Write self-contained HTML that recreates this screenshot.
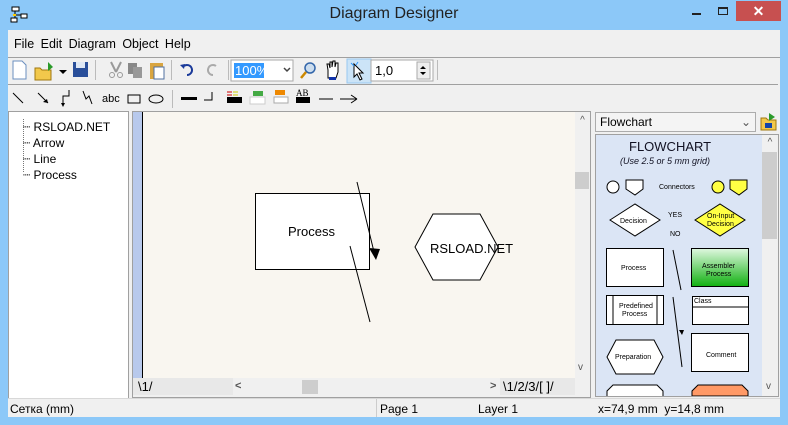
<!DOCTYPE html>
<html><head><meta charset="utf-8"><style>
*{margin:0;padding:0;box-sizing:border-box}
body{width:788px;height:425px;overflow:hidden;background:#8cc8f8;font-family:"Liberation Sans",sans-serif;font-size:12px;position:relative;color:#000}
.a{position:absolute}
</style></head><body>
<div class="a" style="left:10px;top:6px;width:18px;height:18px">
<svg width="18" height="18"><rect x="2" y="1" width="7" height="4" fill="#fff" stroke="#000"/><rect x="1" y="12" width="6" height="4" fill="#fff" stroke="#000"/><rect x="11" y="8" width="6" height="4" fill="#fff" stroke="#000"/><path d="M5 5v7M5 9h6" stroke="#000" fill="none"/><rect x="3" y="8" width="3" height="2" fill="#fc0"/></svg></div>
<div class="a" style="left:0;width:788px;top:5px;text-align:center;font-size:16px;color:#222">Diagram Designer</div>
<div class="a" style="left:692px;top:13px;width:9px;height:2px;background:#222"></div>
<div class="a" style="left:718px;top:7px;width:10px;height:8px;border:1px solid #222;border-top-width:2px"></div>
<div class="a" style="left:736px;top:1px;width:45px;height:20px;background:#c75050;color:#fff;text-align:center;font-size:14px;font-weight:bold;line-height:20px">✕</div>
<div class="a" style="left:8px;top:30px;width:772px;height:387px;background:#f0f0f0"></div>
<div class="a" style="left:14px;top:37px;font-size:12.5px;word-spacing:3px">File Edit Diagram Object Help</div>
<div class="a" style="left:8px;top:57px;width:772px;height:1px;background:#a0a0a0"></div>
<div class="a" style="left:8px;top:84px;width:770px;height:1px;background:#a0a0a0"></div>
<svg class="a" style="left:8px;top:58px" width="440" height="26">
<path d="M5 3h9l4 4v14H5z" fill="#fff" stroke="#6b8fbf"/>
<path d="M27 10h5l2 2h9v10H27z" fill="#f2c84b" stroke="#a07810"/><path d="M40 4l5 5-5 4" fill="#2a9a2a"/>
<path d="M51 12l4 4 4-4z" fill="#000"/>
<rect x="65" y="4" width="15" height="15" fill="#2a4f9a"/><rect x="68" y="4" width="9" height="6" fill="#dfe8f5"/>
<rect x="87" y="2" width="1" height="20" fill="#bbb"/>
<path d="M103 4l5 10M113 4l-5 10" stroke="#999" stroke-width="2"/><circle cx="104" cy="17" r="2.5" fill="none" stroke="#999"/><circle cx="112" cy="17" r="2.5" fill="none" stroke="#999"/>
<rect x="120" y="5" width="9" height="11" fill="#888"/><rect x="125" y="9" width="9" height="11" fill="#999"/>
<rect x="142" y="5" width="13" height="16" fill="#d9a540"/><rect x="146" y="9" width="10" height="12" fill="#fff" stroke="#5070a0"/>
<rect x="163" y="2" width="1" height="20" fill="#bbb"/>
<path d="M176 8a5 5 0 1 1 3 9" fill="none" stroke="#1a3a9a" stroke-width="2"/><path d="M172 7l4 4 1-5z" fill="#1a3a9a"/>
<path d="M208 8a5 5 0 1 0-3 9" fill="none" stroke="#aaa" stroke-width="2"/>
<rect x="220" y="2" width="1" height="20" fill="#bbb"/>
<rect x="223" y="2" width="62" height="21" fill="#fff" stroke="#aaa"/>
<rect x="226" y="5" width="30" height="15" fill="#3399ff"/><text x="227" y="17" fill="#fff" font-size="13" font-family="Liberation Sans">100%</text>
<path d="M276 10l3 3 3-3" stroke="#444" stroke-width="1.5" fill="none"/>
<circle cx="302" cy="10" r="5" fill="#cde" stroke="#36a" stroke-width="1.5"/><path d="M298 14l-5 6" stroke="#c80" stroke-width="2.5"/>
<path d="M320 20v-8l-1-6 2 0 1 4 0-6 2 0 0 5 1-6 2 0 0 6 1-4 2 0 0 9-2 6z" fill="#fff" stroke="#000"/><rect x="321" y="19" width="7" height="3" fill="#13a"/>
<rect x="339" y="1" width="24" height="24" fill="#cce4f7" stroke="#99c8f0"/>
<path d="M346 6l0 13 3-3 3 6 2-1-3-6 4 0z" fill="#fff" stroke="#000"/><path d="M343 5l3 3M350 4l-2 3" stroke="#39f"/>
<rect x="363" y="2" width="62" height="21" fill="#fff" stroke="#aaa"/>
<text x="367" y="17" font-size="13" font-family="Liberation Sans">1,0</text>
<rect x="409" y="4" width="13" height="17" fill="#eee" stroke="#aaa"/><path d="M412 11l3-3 3 3zM412 14l3 3 3-3z" fill="#000"/>
<rect x="429" y="2" width="1" height="20" fill="#bbb"/>
</svg>
<svg class="a" style="left:8px;top:85px" width="380" height="25">
<path d="M5 8l10 10" stroke="#000"/><path d="M30 8l10 10" stroke="#000"/><path d="M40 18l-5-1 4-3z" fill="#000"/>
<path d="M61 5v6h-6v10" stroke="#000" fill="none"/><path d="M53 18l2 4 2-4z" fill="#000"/>
<path d="M75 6l3 8 3-3 3 8" stroke="#000" fill="none"/>
<text x="94" y="17" font-size="11" font-family="Liberation Sans">abc</text>
<rect x="120" y="10" width="12" height="8" fill="none" stroke="#000"/>
<ellipse cx="148" cy="14" rx="7" ry="4" fill="none" stroke="#000"/>
<rect x="164" y="5" width="1" height="18" fill="#bbb"/>
<rect x="173" y="12" width="16" height="3" fill="#000"/>
<path d="M196 15h8v-8" stroke="#000" fill="none"/>
<path d="M219 7h5M219 10h5" stroke="#c00"/><path d="M225 7h5M225 10h5" stroke="#cc0"/><rect x="219" y="12" width="15" height="6" fill="#000"/>
<rect x="245" y="6" width="10" height="5" fill="#4a4"/><rect x="242" y="12" width="15" height="7" fill="#fff" stroke="#ccc"/>
<rect x="267" y="5" width="10" height="5" fill="#e80"/><rect x="266" y="12" width="14" height="6" fill="#fff" stroke="#aaa"/>
<text x="288" y="11" font-size="9" font-family="Liberation Serif">AB</text><rect x="288" y="12" width="14" height="6" fill="#000"/>
<path d="M311 14h14" stroke="#000"/><path d="M332 14h16" stroke="#000"/><path d="M349 14l-6-4M349 14l-6 4" stroke="#000"/>
</svg>
<div class="a" style="left:8px;top:111px;width:121px;height:288px;background:#fff;border:1px solid #a0a0a0"></div>
<div class="a" style="left:23px;top:119px;width:1px;height:53px;border-left:1px dotted #777"></div>
<div class="a" style="left:23px;top:119px;line-height:16px">
<div>┈ RSLOAD.NET</div><div>┈ Arrow</div><div>┈ Line</div><div>┈ Process</div></div>
<div class="a" style="left:132px;top:111px;width:459px;height:287px;background:#f0f0f0;border:1px solid #a0a0a0"></div>
<div class="a" style="left:133px;top:112px;width:9px;height:266px;background:#b8c9ec"></div>
<div class="a" style="left:142px;top:112px;width:1px;height:266px;background:#000"></div>
<svg class="a" style="left:143px;top:112px" width="432" height="266">
<rect width="432" height="266" fill="#f9f6f0"/>
<rect x="112.5" y="81.5" width="114" height="76" fill="#fff" stroke="#000"/>
<text x="145" y="124" font-size="13" font-family="Liberation Sans">Process</text>
<path d="M214 70l18 74" stroke="#000"/><path d="M226 136l11 1-4 11z" fill="#000"/>
<path d="M207 134l20 76" stroke="#000"/>
<path d="M272 135l18-33h47l18 33-18 33h-47z" fill="#fff" stroke="#000"/>
<text x="287" y="141" font-size="13" font-family="Liberation Sans">RSLOAD.NET</text>
</svg>
<div class="a" style="left:575px;top:112px;width:15px;height:266px;background:#f0f0f0;text-align:center;font-size:10px;color:#555">
<div style="margin-top:3px">^</div></div>
<div class="a" style="left:575px;top:172px;width:14px;height:17px;background:#cdcdcd"></div>
<div class="a" style="left:578px;top:362px;font-size:10px;color:#555">v</div>
<div class="a" style="left:133px;top:378px;width:457px;height:17px;background:#f0f0f0"></div>
<div class="a" style="left:133px;top:378px;width:100px;height:17px;background:#e8e8e8"></div>
<div class="a" style="left:138px;top:379px;font-size:13px">\1/</div>
<div class="a" style="left:235px;top:380px;font-size:11px;color:#555;font-weight:bold">&lt;</div>
<div class="a" style="left:302px;top:380px;width:16px;height:14px;background:#cdcdcd"></div>
<div class="a" style="left:490px;top:380px;font-size:11px;color:#555;font-weight:bold">&gt;</div>
<div class="a" style="left:500px;top:378px;width:75px;height:17px;background:#e8e8e8"></div>
<div class="a" style="left:503px;top:379px;font-size:13px">\1/2/3/[ ]/</div>
<div class="a" style="left:595px;top:112px;width:161px;height:20px;background:#f4f4f4;border:1px solid #acacac;padding:2px 4px">Flowchart<span style="float:right;color:#555">⌄</span></div>
<svg class="a" style="left:760px;top:112px" width="18" height="20"><path d="M1 6h5l2 2h8v10H1z" fill="#f2c84b" stroke="#a07810"/><path d="M9 1l6 4-6 4" fill="#2a9a2a"/><rect x="5" y="11" width="7" height="5" fill="#14a"/></svg>
<div class="a" style="left:595px;top:134px;width:184px;height:263px;border:1px solid #a0a0a0;background:#dbe5f5;overflow:hidden"></div>
<div class="a" style="left:762px;top:135px;width:16px;height:261px;background:#f0f0f0;font-size:10px;color:#555;text-align:center"><div style="margin-top:2px">^</div></div>
<div class="a" style="left:762px;top:152px;width:15px;height:87px;background:#cdcdcd"></div>
<div class="a" style="left:766px;top:381px;font-size:10px;color:#555">v</div>
<svg class="a" style="left:596px;top:135px" width="166" height="261" font-family="Liberation Sans">
<text x="33" y="16" font-size="13" fill="#112">FLOWCHART</text>
<text x="24" y="29" font-size="9" font-style="italic" fill="#112">(Use 2.5 or 5 mm grid)</text>
<circle cx="17" cy="52" r="6" fill="#fff" stroke="#000"/><path d="M30 45h17v9l-8 6-9-6z" fill="#fff" stroke="#000"/>
<text x="63" y="54" font-size="7">Connectors</text>
<circle cx="122" cy="52" r="6" fill="#ff4" stroke="#000"/><path d="M134 45h17v9l-8 6-9-6z" fill="#ff4" stroke="#000"/>
<path d="M14 85l25-16 25 16-25 16z" fill="#fff" stroke="#000"/><text x="24" y="88" font-size="7">Decision</text>
<text x="72" y="82" font-size="7">YES</text><text x="74" y="101" font-size="7">NO</text>
<path d="M99 85l25-16 25 16-25 16z" fill="#ff4" stroke="#000"/><text x="111" y="83" font-size="7">On-Input</text><text x="111" y="91" font-size="7">Decision</text>
<rect x="10.5" y="113.5" width="57" height="38" fill="#fff" stroke="#000"/><text x="25" y="135" font-size="7">Process</text>
<path d="M77 115l8 40" stroke="#000"/>
<defs><linearGradient id="g" x1="0" y1="0" x2="0" y2="1"><stop offset="0" stop-color="#e0f8e0"/><stop offset="1" stop-color="#10b010"/></linearGradient></defs>
<rect x="95.5" y="113.5" width="57" height="38" fill="url(#g)" stroke="#000"/><text x="106" y="133" font-size="7">Assembler</text><text x="110" y="141" font-size="7">Process</text>
<rect x="10.5" y="160.5" width="57" height="29" fill="#fff" stroke="#000"/><path d="M17 161v29M61 161v29" stroke="#000"/>
<text x="23" y="173" font-size="7">Predefined</text><text x="26" y="181" font-size="7">Process</text>
<path d="M77 162l9 70" stroke="#000"/><path d="M83 195l3 5 2-5z" fill="#000"/>
<rect x="96.5" y="161.5" width="56" height="28" fill="#fff" stroke="#000"/><path d="M97 172h56" stroke="#000"/><text x="98" y="168" font-size="7">Class</text>
<path d="M11 222l9-17h38l9 17-9 17H20z" fill="#fff" stroke="#000"/><text x="19" y="224" font-size="7">Preparation</text>
<rect x="95.5" y="198.5" width="57" height="38" fill="#fff" stroke="#000"/><text x="110" y="222" font-size="7">Comment</text>
<path d="M11 261v-5l6-6h44l6 6v5" fill="#fff" stroke="#000"/>
<path d="M96 261v-5l6-6h44l6 6v5z" fill="#f96" stroke="#000"/>
</svg>
<div class="a" style="left:8px;top:398px;width:772px;height:1px;background:#d8d8d8"></div>
<div class="a" style="left:10px;top:402px">Сетка (mm)</div>
<div class="a" style="left:376px;top:399px;width:1px;height:18px;background:#ccc"></div>
<div class="a" style="left:380px;top:402px">Page 1</div>
<div class="a" style="left:478px;top:402px">Layer 1</div>
<div class="a" style="left:598px;top:402px">x=74,9 mm&nbsp; y=14,8 mm</div>
</body></html>
